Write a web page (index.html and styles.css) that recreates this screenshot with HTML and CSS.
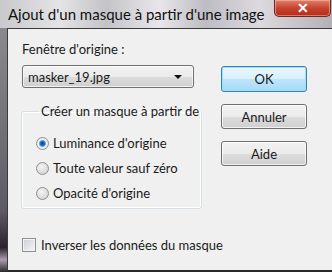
FILE: index.html
```html
<!DOCTYPE html>
<html lang="fr">
<head>
  <meta charset="utf-8">
  <title>Ajout d'un masque à partir d'une image</title>
  <link rel="stylesheet" href="styles.css">
</head>
<body>
  <div class="window">
    <div class="titlebar">
      <span class="title">Ajout d'un masque à partir d'une image</span>
      <button class="close-button">✕</button>
    </div>
    <div class="frame">
      <div class="frame-edge"></div>
      <div class="client">
        <div class="main-column">
          <p class="field-label">Fenêtre d'origine :</p>
          <div class="select">
            <span>masker_19.jpg</span>
            <span class="select-arrow"></span>
          </div>
          <fieldset class="group">
            <legend>Créer un masque à partir de</legend>
            <label class="radio-row"><span class="radio checked"></span>Luminance d'origine</label>
            <label class="radio-row"><span class="radio"></span>Toute valeur sauf zéro</label>
            <label class="radio-row"><span class="radio"></span>Opacité d'origine</label>
          </fieldset>
          <label class="check-row"><span class="checkbox"></span>Inverser les données du masque</label>
        </div>
        <div class="button-column">
          <button class="dialog-button default">OK</button>
          <button class="dialog-button">Annuler</button>
          <button class="dialog-button">Aide</button>
        </div>
      </div>
    </div>
  </div>
</body>
</html>
```

FILE: styles.css
```css
body {
  margin: 0;
  padding: 0;
  font-family: 'Lato', sans-serif;
  font-size: 13px;
  color: #1a1a1a;
  overflow: hidden;
}
.window {
  width: 332px;
  height: 272px;
  display: flex;
  flex-direction: column;
  background: #2a2a2e;
}
.titlebar {
  height: 28px;
  display: flex;
  align-items: flex-start;
  background: linear-gradient(90deg, #c9c9cc 0%, #e4e4e6 18%, #c4c4c8 32%, #e8e6ea 48%, #bdbcc2 62%, #dcdadf 78%, #b3b1b7 100%);
}
.title {
  font-size: 15px;
  line-height: 18px;
  padding: 5px 0 0 8px;
  color: #111;
  white-space: nowrap;
}
.close-button {
  margin-left: auto;
  margin-right: 1px;
  width: 57px;
  height: 17px;
  border: 1px solid #6b2a20;
  border-top: none;
  border-radius: 0 0 5px 5px;
  background: linear-gradient(#e0806c 0%, #c7442f 50%, #b52b17 100%);
  color: #fff;
  font-size: 14px;
  font-weight: bold;
  line-height: 15px;
  padding: 0;
  box-shadow: inset 0 0 0 1px rgba(255, 200, 190, 0.5);
}
.frame {
  flex-grow: 1;
  display: flex;
}
.frame-edge {
  width: 7px;
  background: linear-gradient(#8a8a8e 0%, #737377 40%, #5d5a62 75%, #2b2230 90%, #a99bb0 95%, #2a2a2e 100%);
}
.client {
  flex-grow: 1;
  height: 243px;
  border-top: 1px solid #3b3b3b;
  border-left: 1px solid #3b3b3b;
  border-bottom: 1px solid #2a2a2a;
  background: #f0f0f0;
  display: flex;
  gap: 27px;
  padding: 12px 0 0 14px;
  box-sizing: border-box;
  white-space: nowrap;
}
.main-column {
  width: 172px;
  flex-shrink: 0;
  display: flex;
  flex-direction: column;
}
.field-label {
  margin: 0;
  line-height: 16px;
}
.select {
  margin-top: 8px;
  height: 23px;
  box-sizing: border-box;
  border: 1px solid #707070;
  border-radius: 3px;
  background: linear-gradient(#f2f2f2 0%, #ebebeb 50%, #dddddd 51%, #cfcfcf 100%);
  display: flex;
  align-items: center;
  justify-content: space-between;
  padding: 0 11px 0 5px;
  box-shadow: inset 0 0 0 1px rgba(255, 255, 255, 0.7);
}
.select-arrow {
  width: 0;
  height: 0;
  border-left: 4px solid transparent;
  border-right: 4px solid transparent;
  border-top: 4px solid #111;
}
.group {
  margin: 15px 0 0 -1px;
  padding: 16px 0 0 14px;
  height: 106px;
  box-sizing: border-box;
  border: 1px solid #d5dfe5;
  border-radius: 3px;
  box-shadow: inset 0 0 0 1px #fff;
  display: flex;
  flex-direction: column;
  gap: 9px;
}
.group legend {
  padding: 0 2px;
  margin-left: 3px;
  line-height: 16px;
}
.radio-row,
.check-row {
  display: flex;
  align-items: center;
  gap: 4px;
  line-height: 16px;
}
.radio {
  flex-shrink: 0;
  width: 13px;
  height: 13px;
  box-sizing: border-box;
  border-radius: 50%;
  border: 1px solid #8e8f8f;
  background: radial-gradient(circle at 40% 35%, #f4f4f4 0%, #dcdcdc 60%, #cfcfcf 100%);
}
.radio.checked {
  background: radial-gradient(circle at 50% 50%, #0d3f78 0%, #2b74c4 30%, #7ab9ee 42%, #eef4fa 50%, #e0e0e0 100%);
}
.check-row {
  margin-top: 28px;
  gap: 5px;
}
.checkbox {
  flex-shrink: 0;
  width: 14px;
  height: 14px;
  box-sizing: border-box;
  border: 1px solid #8e8f8f;
  background: linear-gradient(135deg, #cbcfd5 0%, #f6f6f6 100%);
  box-shadow: inset 0 0 0 1px #f4f4f4;
}
.button-column {
  display: flex;
  flex-direction: column;
  gap: 12px;
  padding-top: 25px;
}
.dialog-button {
  width: 86px;
  height: 25px;
  border: 1px solid #707070;
  border-radius: 3px;
  background: linear-gradient(#f2f2f2 0%, #ebebeb 50%, #dddddd 51%, #cfcfcf 100%);
  box-shadow: inset 0 0 0 1px rgba(255, 255, 255, 0.7);
  font-family: 'Lato', sans-serif;
  font-size: 13px;
  color: #1a1a1a;
  padding: 0;
}
.dialog-button.default {
  height: 26px;
  border-color: #3c7fb1;
  background: linear-gradient(#eaf6fd 0%, #d9f0fc 50%, #bee6fd 51%, #a7d9f5 100%);
  box-shadow: inset 0 0 0 1px #97e3f8;
}
```
